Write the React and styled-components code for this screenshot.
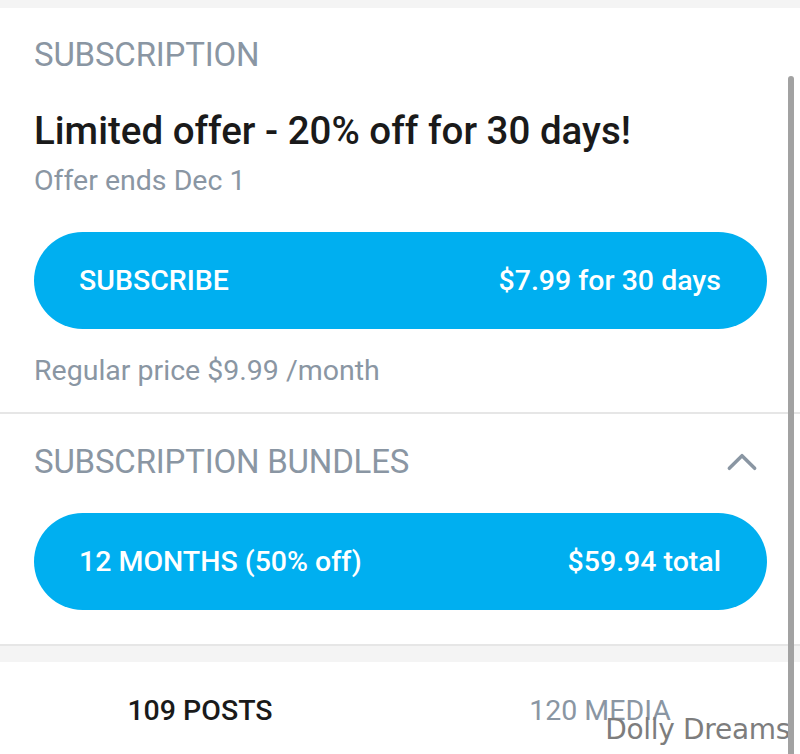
import React from "react";
import styled, { createGlobalStyle } from "styled-components";

const Global = createGlobalStyle`
  html, body { margin: 0; padding: 0; background: #ffffff; }
  body { font-family: Roboto, "Liberation Sans", sans-serif; }
  * { box-sizing: border-box; }
`;

const Page = styled.div`
  position: relative;
  width: 800px;
  height: 754px;
  overflow: hidden;
  background: #ffffff;
  display: flex;
  flex-direction: column;
`;

const Band = styled.div`
  height: ${(p) => p.$h}px;
  background: #f4f4f4;
  flex-shrink: 0;
`;

const Section = styled.section`
  padding: ${(p) => p.$pad};
  display: flex;
  flex-direction: column;
  flex-shrink: 0;
  border-bottom: ${(p) => (p.$divider ? "2px solid #e6e6e6" : "none")};
`;

const SectionHead = styled.div`
  display: flex;
  align-items: center;
  justify-content: space-between;
  height: 40px;
`;

const Label = styled.h2`
  margin: 0;
  font-size: 33px;
  font-weight: 400;
  color: #8a96a3;
  letter-spacing: -0.2px;
  line-height: 40px;
`;

const Title = styled.h1`
  margin: 34px 0 0;
  font-size: 38.5px;
  font-weight: 500;
  color: #1a1a1a;
  line-height: 44px;
`;

const Sub = styled.p`
  margin: ${(p) => p.$m};
  font-size: 28.5px;
  color: #8a96a3;
  line-height: 34px;
`;

const PillButton = styled.button`
  margin-top: ${(p) => p.$mt}px;
  width: 100%;
  height: 97px;
  flex-shrink: 0;
  border: none;
  border-radius: 49px;
  background: #00aff0;
  color: #ffffff;
  display: flex;
  align-items: center;
  justify-content: space-between;
  padding: 0 46px 0 45px;
  font-family: Roboto, "Liberation Sans", sans-serif;
  font-size: 28.5px;
  font-weight: 500;
`;

const Chevron = styled.svg`
  width: 38px;
  height: 38px;
  margin-right: 6px;
`;

const Tabs = styled.div`
  display: grid;
  grid-template-columns: 1fr 1fr;
  height: 96px;
  align-items: center;
  flex-shrink: 0;
`;

const Tab = styled.div`
  text-align: center;
  font-size: 28.5px;
  color: ${(p) => (p.$active ? "#1a1a1a" : "#8a96a3")};
  font-weight: ${(p) => (p.$active ? 500 : 400)};
`;

const Watermark = styled.div`
  position: absolute;
  right: 10px;
  bottom: 8px;
  font-family: "DejaVu Sans", sans-serif;
  font-size: 28px;
  color: #7d7d7d;
  letter-spacing: -0.3px;
`;

const Scrollbar = styled.div`
  position: absolute;
  left: 788px;
  top: 76px;
  width: 6px;
  bottom: 0;
  background: #a2a2a2;
  border-radius: 3px 3px 0 0;
`;

export default function App() {
  return (
    <Page>
      <Global />
      <Band $h={8} />
      <Section $pad="27px 33px 24px 34px" $divider>
        <SectionHead>
          <Label>SUBSCRIPTION</Label>
        </SectionHead>
        <Title>Limited offer - 20% off for 30 days!</Title>
        <Sub $m="11px 0 0">Offer ends Dec 1</Sub>
        <PillButton $mt={34}>
          <span>SUBSCRIBE</span>
          <span>$7.99 for 30 days</span>
        </PillButton>
        <Sub $m="25px 0 0">Regular price $9.99 /month</Sub>
      </Section>
      <Section $pad="28px 33px 34px 34px" $divider>
        <SectionHead>
          <Label>SUBSCRIPTION BUNDLES</Label>
          <Chevron viewBox="0 0 24 24" fill="none" stroke="#8a96a3" strokeWidth="2.2" strokeLinecap="round" strokeLinejoin="round">
            <path d="M4 16 L12 8 L20 16" />
          </Chevron>
        </SectionHead>
        <PillButton $mt={31}>
          <span>12 MONTHS (50% off)</span>
          <span>$59.94 total</span>
        </PillButton>
      </Section>
      <Band $h={16} />
      <Tabs>
        <Tab $active>109 POSTS</Tab>
        <Tab>120 MEDIA</Tab>
      </Tabs>
      <Watermark>Dolly Dreams</Watermark>
      <Scrollbar />
    </Page>
  );
}
